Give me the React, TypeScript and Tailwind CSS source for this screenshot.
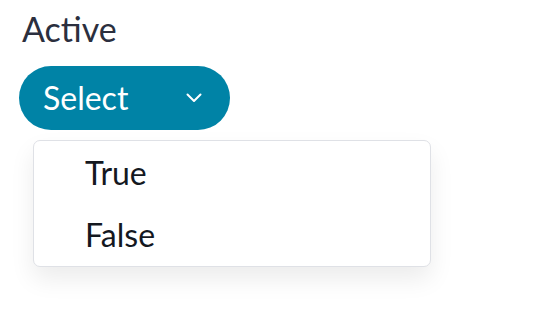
export default function App() {
  const options = ["True", "False"];

  return (
    <div className="min-h-screen bg-white font-['Lato','Noto_Sans',sans-serif]">
      <div className="pl-[19px] pt-[9px]">
        {/* label */}
        <div className="pl-[3px] text-[34px] leading-[40px] text-[#2b2f3e]">Active</div>

        {/* select button */}
        <button className="mt-[17px] flex h-[64px] w-[211px] items-center rounded-full bg-[#0083a6] pl-[24px] pr-[28px] text-white">
          <span className="text-[32px] leading-[38px]">Select</span>
          <svg
            className="ml-auto"
            width="16"
            height="10"
            viewBox="0 0 16 10"
            fill="none"
            stroke="white"
            strokeWidth="2"
            strokeLinecap="round"
            strokeLinejoin="round"
          >
            <path d="M1.5 1.5 L8 8 L14.5 1.5" />
          </svg>
        </button>

        {/* dropdown menu */}
        <div className="ml-[14px] mt-[10px] w-[398px] rounded-[7px] border border-[#dfe1e6] bg-white pt-px shadow-[0_12px_24px_rgba(0,0,0,0.08)]">
          {options.map((o) => (
            <div key={o} className="flex h-[62px] items-center pl-[51px] text-[32px] leading-[38px] text-[#14181f]">
              {o}
            </div>
          ))}
        </div>
      </div>
    </div>
  );
}
